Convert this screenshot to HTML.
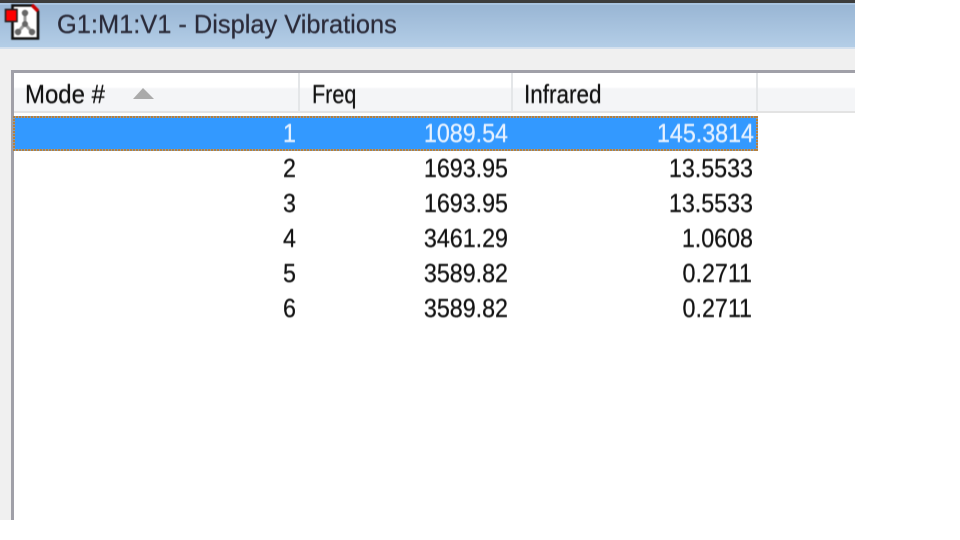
<!DOCTYPE html>
<html>
<head>
<meta charset="utf-8">
<style>
html,body{margin:0;padding:0;width:960px;height:540px;background:#fff;overflow:hidden}
body{position:relative;font-family:"Liberation Sans",sans-serif;color:#111}
div{position:absolute;box-sizing:border-box}
.t{white-space:nowrap;line-height:30px;height:30px;font-size:26px;transform-origin:right center;transform:scaleX(.895);filter:blur(.4px);-webkit-text-stroke:.25px currentColor}
.l{transform-origin:left center}
.r{text-align:right;width:200px}
.dh{height:2px;background:repeating-linear-gradient(90deg,#b5813f 0,#b5813f 2px,#7f9fc0 2px,#7f9fc0 3px)}
.dv{width:2px;background:repeating-linear-gradient(0deg,#b5813f 0,#b5813f 2px,#7f9fc0 2px,#7f9fc0 3px)}
</style>
</head>
<body>
<div style="left:0;top:0;width:855px;height:520px;background:#f0f0f0"></div>
<div style="left:0;top:0;width:855px;height:48px;background:linear-gradient(#96b3d2,#b4cee7)"></div>
<div style="left:0;top:0;width:855px;height:3px;background:#3c3c3c"></div>
<div style="left:0;top:3px;width:855px;height:2px;background:#a9c4e0"></div>
<div style="left:0;top:47px;width:855px;height:2px;background:#d3e0ee"></div>

<svg style="position:absolute;left:0;top:0;filter:blur(.6px)" width="50" height="48" viewBox="0 0 50 48">
<path d="M12.500 5.500H32L38 11.500V38.500H12.500Z" fill="#fff" stroke="#111" stroke-width="2.600"/>
<path d="M32 5L38 11" stroke="#c00" stroke-width="3.500"/>
<path d="M25 14V24M25 24L18 32M25 24L32 32" stroke="#999" stroke-width="3" fill="none"/>
<circle cx="25" cy="13" r="3.200" fill="#666"/><circle cx="25" cy="24" r="3" fill="#666"/>
<circle cx="18" cy="32" r="3.200" fill="#666"/><circle cx="32" cy="32" r="3.200" fill="#666"/>
<rect x="5.500" y="9.500" width="11.500" height="12" fill="#f00" stroke="#222" stroke-width="1.600"/>
</svg>
<div class="t l" style="left:57px;top:9px;color:#2a2a38;transform:scaleX(.977)">G1:M1:V1 - Display Vibrations</div>

<div style="left:11px;top:70px;width:844px;height:450px;background:#fff;border-top:3px solid #a0a0a8;border-left:3px solid #a0a0a8"></div>
<div style="left:14px;top:73px;width:841px;height:40px;background:linear-gradient(#fff 0,#fff 14px,#f4f5f7 16px,#f4f5f7 100%);border-bottom:2px solid #e3e3e3"></div>
<div style="left:298px;top:73px;width:2px;height:39px;background:#e4e6e8"></div>
<div style="left:511px;top:73px;width:2px;height:39px;background:#e4e6e8"></div>
<div style="left:756px;top:73px;width:2px;height:39px;background:#e4e6e8"></div>
<div class="t l" style="left:25px;top:79px;transform:scaleX(.922)">Mode #</div>
<svg style="position:absolute;left:132px;top:87px" width="24" height="13"><path d="M1 12L11 1L22 12Z" fill="#aaa"/></svg>
<div class="t l" style="left:312px;top:79px;transform:scaleX(.83)">Freq</div>
<div class="t l" style="left:524px;top:79px;transform:scaleX(.865)">Infrared</div>

<div style="left:13px;top:116px;width:745px;height:35px;background:#3399ff"></div>
<div class="dh" style="left:13px;top:116px;width:745px"></div>
<div class="dh" style="left:13px;top:149px;width:745px"></div>
<div class="dv" style="left:13px;top:116px;height:35px"></div>
<div class="dv" style="left:756px;top:116px;height:35px"></div>

<div class="t r" style="left:96px;top:118px;color:#e8f2ff">1</div>
<div class="t r" style="left:308px;top:118px;color:#e8f2ff">1089.54</div>
<div class="t r" style="left:554px;top:118px;color:#e8f2ff">145.3814</div>

<div class="t r" style="left:96px;top:153px">2</div>
<div class="t r" style="left:308px;top:153px">1693.95</div>
<div class="t r" style="left:553px;top:153px">13.5533</div>

<div class="t r" style="left:96px;top:188px">3</div>
<div class="t r" style="left:308px;top:188px">1693.95</div>
<div class="t r" style="left:553px;top:188px">13.5533</div>

<div class="t r" style="left:96px;top:223px">4</div>
<div class="t r" style="left:308px;top:223px">3461.29</div>
<div class="t r" style="left:553px;top:223px">1.0608</div>

<div class="t r" style="left:96px;top:258px">5</div>
<div class="t r" style="left:308px;top:258px">3589.82</div>
<div class="t r" style="left:552px;top:258px">0.2711</div>

<div class="t r" style="left:96px;top:293px">6</div>
<div class="t r" style="left:308px;top:293px">3589.82</div>
<div class="t r" style="left:552px;top:293px">0.2711</div>
</body>
</html>
